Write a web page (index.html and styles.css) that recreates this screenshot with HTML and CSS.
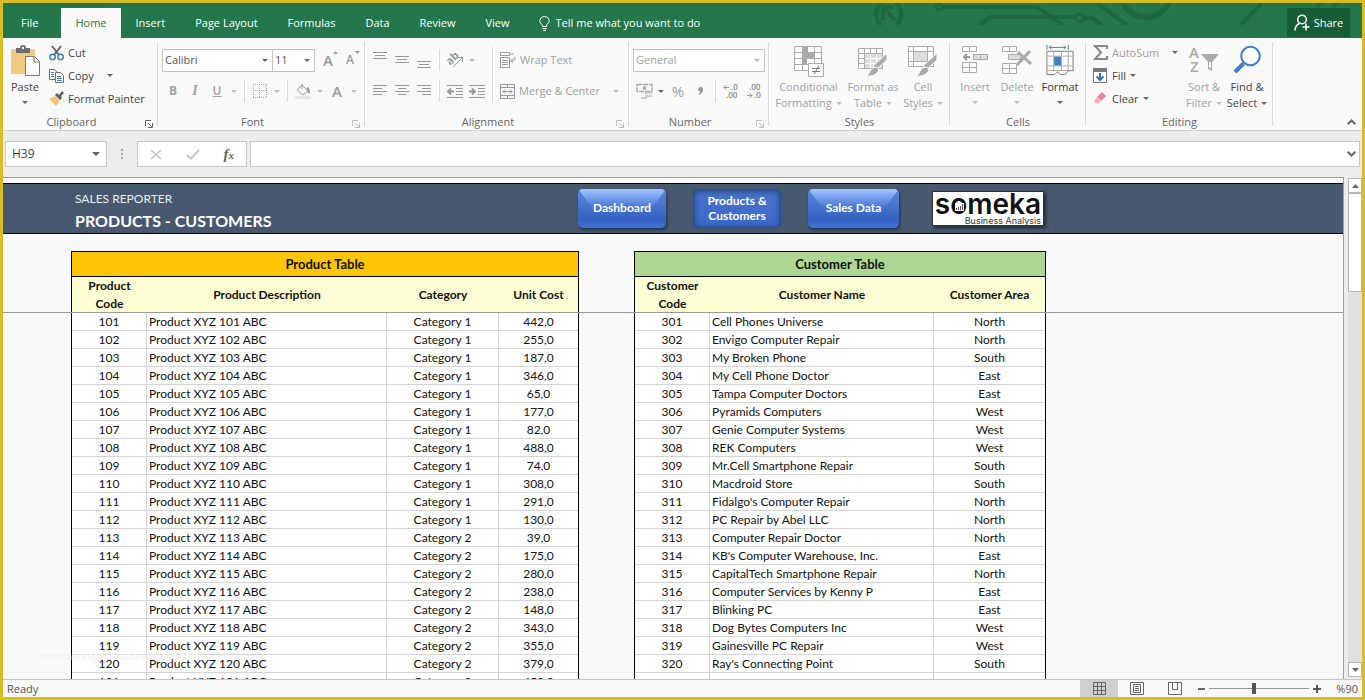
FILE: index.html
```html
<!DOCTYPE html>
<html lang="en">
<head>
<meta charset="utf-8">
<title>Sales Reporter - Products and Customers</title>
<link rel="stylesheet" href="styles.css">
</head>
<body>
<div class="app">
  <header class="titlebar">
    <svg class="circuit" width="480" height="22" viewBox="0 0 480 22" fill="none" stroke="#1d683f" stroke-width="4">
      <path d="M12 -1Q0 10 12 24M25 -1Q38 10 25 24M13 3v14M13 4h10M14 5l11 12" />
      <circle cx="69" cy="4" r="3" stroke-width="2.500"/><path d="M73 4h94l26 18" />
      <path d="M110 22l10-8h86" /><circle cx="210" cy="15" r="4" stroke-width="2.500"/><path d="M214 15h8l10 7M227 0l30 22" />
      <path d="M252 -2a26 26 0 0 0 48 0" stroke-width="6"/><path d="M371 22l21-22M446 4l5-5M462 4l5-5" />
    </svg>
    <nav class="tabs">
      <button class="tab tab-file">File</button>
      <button class="tab tab-active">Home</button>
      <button class="tab">Insert</button>
      <button class="tab">Page Layout</button>
      <button class="tab">Formulas</button>
      <button class="tab">Data</button>
      <button class="tab">Review</button>
      <button class="tab">View</button>
      <button class="tab tell"><svg width="11" height="15" viewBox="0 0 11 15" fill="none" stroke="#fff"><path d="M3.500 10.500V9C1.500 7.500.8 6.300.8 4.800a4.700 4.200 0 0 1 9.400 0c0 1.500-.7 2.700-2.700 4.200v1.500zM3.500 12.500h4M4 14.300h3"/></svg>Tell me what you want to do</button>
    </nav>
    <button class="share"><svg width="17" height="17" viewBox="0 0 17 17" fill="none" stroke="#fff" stroke-width="1.500"><circle cx="8" cy="5.500" r="4.300"/><path d="M1 16.500c0-4 2-6 4.500-7M8.500 13h7M12 9.500v7"/></svg>Share</button>
  </header>

  <section class="ribbon">
    <div class="group g-clipboard">
      <div class="content">
        <button class="big w-paste">
          <svg width="30" height="32" viewBox="0 0 30 32"><path fill="#f2cb83" d="M1 4h24v25H1z"/><path fill="#6d6d6d" d="M6 3h4a3 3 0 0 1 6 0h4v5H6z"/><circle cx="13" cy="3" r="1.200" fill="#fff"/><path d="M15.500 11.500h9l5 5v14h-14zM24 12v5h5" fill="#fff" stroke="#777"/></svg>
          <span>Paste</span><i class="arr"></i>
        </button>
        <div class="stack">
          <button class="item"><svg width="15" height="16" viewBox="0 0 15 16" fill="none"><path stroke="#666" stroke-width="2" d="M3 1l7 9M12 1L5 10"/><circle cx="3.500" cy="12" r="2.700" stroke="#3f7fc0" stroke-width="1.500"/><circle cx="11.500" cy="12" r="2.700" stroke="#3f7fc0" stroke-width="1.500"/></svg>Cut</button>
          <button class="item"><svg width="15" height="15" viewBox="0 0 15 15" fill="#fff" stroke="#6d6d6d"><path d="M.5 1.500h5l2 2v8h-7z"/><path stroke="#3f7fc0" d="M2 4.500h3M2 6.500h3M2 8.500h3"/><path d="M6.500 4.500h5l3 3v7h-8z"/><path stroke="#3f7fc0" d="M8 8.500h4M8 10.500h5M8 12.500h5"/></svg>Copy<i class="arr arr-gap"></i></button>
          <button class="item"><svg width="15" height="15" viewBox="0 0 15 15"><path fill="#f0c57a" d="M0 8l6-3 5 5-4 5z"/><path fill="#5f5f5f" d="M6 4l2-2 2 2 3-4 2 2-3 3 1 2-2 2z"/></svg>Format Painter</button>
        </div>
      </div>
      <div class="label">Clipboard<svg class="launch" width="8" height="8" viewBox="0 0 8 8" fill="none" stroke="currentColor"><path d="M.5 6V.5H6M3 3l4 4M7.500 3v4.500H3"/></svg></div>
    </div>

    <div class="group g-font off">
      <div class="content rows">
        <div class="row">
          <label class="combo w-name"><select aria-label="Font"><option>Calibri</option></select><i class="arr"></i></label>
          <label class="combo w-size"><select aria-label="Font size"><option>11</option></select><i class="arr"></i></label>
          <button class="ic glyph" aria-label="Increase font size">A<svg class="sup" width="5" height="3"><path fill="#999" d="M0 3L2.500 0 5 3z"/></svg></button>
          <button class="ic glyph small-a" aria-label="Decrease font size">A<svg class="sup" width="5" height="3"><path fill="#999" d="M0 0h5L2.500 3z"/></svg></button>
        </div>
        <div class="row">
          <button class="ic bold">B</button><button class="ic italic">I</button><button class="ic under">U</button><button class="dd" aria-label="Underline style"><i class="arr"></i></button>
          <i class="sep"></i>
          <button class="ic" aria-label="Borders"><svg width="14" height="14" viewBox="0 0 14 14" stroke="#aaa" fill="none" stroke-dasharray="1 1"><path d="M.5 0v14M6.500 0v14M13.500 0v14M0 .5h14M0 6.500h14M0 13.500h14"/></svg></button><button class="dd" aria-label="Border style"><i class="arr"></i></button>
          <i class="sep"></i>
          <button class="ic" aria-label="Fill color"><svg width="16" height="16" viewBox="0 0 16 16" fill="none" stroke="#999"><path d="M7 2l6 6-5 4-6-5zM7 1V6"/><path d="M12 5c2 1 2 3 2 5" stroke-width="2"/><path stroke="#e6e6e6" stroke-width="3" d="M0 14.500h16"/></svg></button><button class="dd" aria-label="Fill palette"><i class="arr"></i></button>
          <button class="ic glyph" aria-label="Font color">A</button><button class="dd" aria-label="Font palette"><i class="arr"></i></button>
        </div>
      </div>
      <div class="label">Font<svg class="launch" width="8" height="8" viewBox="0 0 8 8" fill="none" stroke="currentColor"><path d="M.5 6V.5H6M3 3l4 4M7.500 3v4.500H3"/></svg></div>
    </div>

    <div class="group g-align off">
      <div class="content">
        <div class="rows">
          <div class="row">
            <button class="ic" aria-label="Top align"><svg width="14" height="18" stroke="#999"><path d="M0 1.500h14M2 4.500h10M0 7.500h14"/></svg></button>
            <button class="ic" aria-label="Middle align"><svg width="14" height="18" stroke="#999"><path d="M0 5.500h14M2 8.500h10M0 11.500h14"/></svg></button>
            <button class="ic" aria-label="Bottom align"><svg width="14" height="18" stroke="#999"><path d="M0 10.500h14M2 13.500h10M0 16.500h14"/></svg></button>
            <i class="sep"></i>
            <button class="ic" aria-label="Orientation"><svg width="17" height="17" viewBox="0 0 17 17" fill="none" stroke="#999"><text x="0" y="10" transform="rotate(-45 6 8)" font-size="11" font-weight="700" fill="#999" stroke="none">ab</text><path d="M6 15L15 6M11 5.500h4.500V10"/></svg></button><button class="dd" aria-label="Orientation menu"><i class="arr"></i></button>
          </div>
          <div class="row">
            <button class="ic" aria-label="Align left"><svg width="14" height="12" stroke="#999"><path d="M0 .5h14M0 3.500h9M0 6.500h14M0 9.500h9"/></svg></button>
            <button class="ic" aria-label="Center"><svg width="14" height="12" stroke="#999"><path d="M0 .5h14M3 3.500h8M0 6.500h14M3 9.500h8"/></svg></button>
            <button class="ic" aria-label="Align right"><svg width="14" height="12" stroke="#999"><path d="M0 .5h14M5 3.500h9M0 6.500h14M5 9.500h9"/></svg></button>
            <i class="sep"></i>
            <button class="ic" aria-label="Decrease indent"><svg width="16" height="13" stroke="#999"><path d="M0 .5h16M9 3.500h7M9 6.500h7M9 9.500h7M0 12.500h16"/><path d="M1 6.500h6M4 3.500l-3 3 3 3" stroke-width="2" fill="none"/></svg></button>
            <button class="ic" aria-label="Increase indent"><svg width="16" height="13" stroke="#999"><path d="M0 .5h16M9 3.500h7M9 6.500h7M9 9.500h7M0 12.500h16"/><path d="M0 6.500h6M3 3.500l3 3-3 3" stroke-width="2" fill="none"/></svg></button>
          </div>
        </div>
        <i class="sep tall"></i>
        <div class="rows">
          <button class="row wide"><svg width="16" height="16" viewBox="0 0 16 16" fill="none" stroke="#999"><path d="M.5.500h9v3h-9zM10 2h4M.5 5.500h9v10h-9zM2 8.500h6M2 10.500h6M2 12.500h6M15 5v2q0 2-4 2M13 6.500L10.500 9l2.500 2"/></svg>Wrap Text</button>
          <button class="row wide"><svg width="15" height="15" viewBox="0 0 15 15" fill="none" stroke="#999"><path d="M.5.500h14v14H.5zM.5 3.500h14M.5 11.500h14M7.500 0v3M7.500 12v3M3 7.500h9M5 5.500l-2 2 2 2M10 5.500l2 2-2 2"/></svg>Merge &amp; Center<i class="arr arr-gap"></i></button>
        </div>
      </div>
      <div class="label">Alignment<svg class="launch" width="8" height="8" viewBox="0 0 8 8" fill="none" stroke="currentColor"><path d="M.5 6V.5H6M3 3l4 4M7.500 3v4.500H3"/></svg></div>
    </div>

    <div class="group g-number off">
      <div class="content rows">
        <div class="row"><label class="combo w-format"><select aria-label="Number format"><option>General</option></select><i class="arr"></i></label></div>
        <div class="row">
          <button class="ic" aria-label="Accounting format"><svg width="17" height="16" viewBox="0 0 17 16" fill="none" stroke="#aaa"><path d="M1 1.500h15v7H1z" stroke-width="1.500" stroke-dasharray="5 1"/><circle cx="8.500" cy="5" r="1.500" fill="#aaa"/><path stroke="#ccc" stroke-width="2" d="M9 10h7M9 13h7M5 15h6"/></svg></button><button class="dd dark" aria-label="Currency menu"><i class="arr"></i></button>
          <button class="ic percent">%</button><button class="ic comma" aria-label="Comma style"><svg width="5" height="8"><path fill="#999" d="M2.500 0A2.200 2.200 0 0 1 5 2.500Q5 6 1 8L.6 7.200Q2.500 6 2.400 4.500A2.200 2.200 0 0 1 2.500 0z"/></svg></button>
          <i class="sep"></i>
          <button class="ic dec" aria-label="Increase decimal"><svg width="15" height="15" viewBox="0 0 15 15" fill="#888"><text x="7" y="6">.0</text><text x="2" y="14">.00</text><path d="M0 3.500h5M2.500 1L0 3.500 2.500 6" stroke="#999" fill="none"/></svg></button>
          <button class="ic dec" aria-label="Decrease decimal"><svg width="15" height="15" viewBox="0 0 15 15" fill="#888"><text x="2" y="6">.00</text><text x="7" y="14">.0</text><path d="M0 11.500h5M2.500 9L5 11.500 2.500 14" stroke="#999" fill="none"/></svg></button>
        </div>
      </div>
      <div class="label">Number<svg class="launch" width="8" height="8" viewBox="0 0 8 8" fill="none" stroke="currentColor"><path d="M.5 6V.5H6M3 3l4 4M7.500 3v4.500H3"/></svg></div>
    </div>

    <div class="group g-styles off">
      <div class="content">
        <button class="big w-cond"><svg width="30" height="32" viewBox="0 0 30 32" fill="#fff" stroke="#aaa"><path d="M.5 1.500h27v24H.5zM.5 7.500h27M.5 13.500h27M.5 19.500h27M8.500 1.500v24M20.500 1.500v24"/><path fill="#aaa" stroke="none" d="M8 2h6v6h6v5h-3v1h-4v6H8z"/><path d="M14.500 18.500h15v13h-15z"/><path stroke="#777" d="M18 23.500h8M18 26.500h8M25 20.500l-5 9"/></svg><span>Conditional</span><span>Formatting<i class="arr"></i></span></button>
        <button class="big w-table"><svg width="30" height="32" viewBox="0 0 30 32" fill="#fff" stroke="#aaa"><path d="M.5 3.500h24v20H.5zM.5 8.500h24M.5 13.500h24M.5 18.500h24M6.500 3.500v20M12.500 3.500v20M18.500 3.500v20"/><path fill="#ddd" d="M6.500 8.500h18v15h-18z"/><path stroke="#fff" d="M7 13.500h17M7 18.500h17M12.500 9v14M18.500 9v14"/><path fill="#aaa" stroke="#fff" d="M29 8v7L19 24l-4-3z"/><path fill="#aaa" stroke="#fff" d="M18 22q4 1 2 5-4 5-12 4 3-1 4-5 2-4 6-4z"/></svg><span>Format as</span><span>Table<i class="arr"></i></span></button>
        <button class="big w-cell"><svg width="30" height="32" viewBox="0 0 30 32" fill="#fff" stroke="#aaa"><path d="M.5 1.500h25v20H.5zM.5 6.500h25M.5 16.500h25M5.500 1.500v20M19.500 1.500v20"/><path fill="#ddd" d="M5.500 6.500h14v10h-14z"/><path fill="#aaa" stroke="#fff" d="M29 8v7L19 24l-4-3z"/><path fill="#aaa" stroke="#fff" d="M18 22q4 1 2 5-4 5-12 4 3-1 4-5 2-4 6-4z"/></svg><span>Cell</span><span>Styles<i class="arr"></i></span></button>
      </div>
      <div class="label">Styles</div>
    </div>

    <div class="group g-cells off">
      <div class="content">
        <button class="big w-cell"><svg width="28" height="32" viewBox="0 0 28 32" fill="#fff" stroke="#aaa"><path d="M1.500 1.500h14v5h-14zM8.500 1.500v5M1.500 17.500h14v10h-14zM8.500 17.500v10M1.500 22.500h14"/><path fill="#ddd" d="M12.500 9.500h14v5h-14zM19.500 9.500v5"/><path fill="none" stroke="#999" stroke-width="2" d="M3 12h6M6 9l-3 3 3 3"/></svg><span>Insert</span><i class="arr"></i></button>
        <button class="big w-cell"><svg width="30" height="32" viewBox="0 0 30 32" fill="#fff" stroke="#aaa"><path d="M.5 1.500h14v5H.5zM7.500 1.500v5M.5 18.500h14v10H.5zM7.500 18.500v10M.5 23.500h14"/><path fill="#ddd" d="M6.500 9.500h12v5h-12z"/><path fill="none" stroke-width="3" d="M16 7l13 12M28 6L15 20"/></svg><span>Delete</span><i class="arr"></i></button>
        <button class="big w-format-cells on"><svg width="28" height="33" viewBox="0 0 28 33" fill="#fff" stroke="#777"><path d="M.5 6.500h27v20H.5z"/><path stroke="#aaa" d="M1 11.500h26M1 21.500h26M7.500 7v19M15.500 7v19M22.500 7v19"/><path d="M.5 26.500v4h8l3-3 3 3h5l3-4"/><path fill="#3f7fc0" stroke="none" d="M8 12h7v9H8z"/><path fill="none" stroke="#3f7fc0" d="M.5 0v5M22.500 0v5M3 2.500h17M5 .500l-2 2 2 2M18 .500l2 2-2 2"/></svg><span>Format</span><i class="arr"></i></button>
      </div>
      <div class="label">Cells</div>
    </div>

    <div class="group g-edit">
      <div class="content">
        <div class="stack w-edit">
          <button class="item off"><svg width="15" height="15" viewBox="0 0 15 15" fill="none" stroke="#888" stroke-width="2"><path d="M14 4V1H2l6 6.500L2 14h12v-3"/></svg>AutoSum<i class="arr arr-gap dark"></i></button>
          <button class="item"><svg width="15" height="15" viewBox="0 0 15 15" fill="#fff" stroke="#777"><path d="M.5.500h13v14H.5z"/><path stroke="none" fill="#777" d="M0 0h14v4H0z"/><path fill="none" stroke="#2f74b8" stroke-width="2" d="M7 5v7M3.500 8.500L7 12l3.500-3.500"/></svg>Fill<i class="arr"></i></button>
          <button class="item"><svg width="15" height="15" viewBox="0 0 15 15"><path fill="#ea8296" d="M9 1l4 4-5 5-4-4z"/><path fill="#f2a9b7" d="M3.500 6.500l4 4-2 2-3-.5-1.500-2z"/></svg>Clear<i class="arr"></i></button>
        </div>
        <button class="big w-cell off"><svg width="30" height="32" viewBox="0 0 30 32"><text x="0" y="13" class="az">A</text><text x="1" y="27" class="az">Z</text><path fill="#aaa" d="M12 9h18l-7 8v9l-4-2v-7z"/><path fill="#fff" d="M20 17h2v6l-2-1z"/></svg><span>Sort &amp;</span><span>Filter<i class="arr"></i></span></button>
        <button class="big w-format-cells"><svg width="28" height="32" viewBox="0 0 28 32" fill="#fff" stroke="#3f7fc0"><circle cx="17.500" cy="11" r="9.300" stroke-width="2"/><path stroke-width="4" d="M10.500 18.500L2 27"/></svg><span>Find &amp;</span><span>Select<i class="arr"></i></span></button>
      </div>
      <div class="label">Editing</div>
    </div>
    <button class="collapse" aria-label="Collapse the ribbon"><svg width="9" height="6" fill="none" stroke="#666" stroke-width="2"><path d="M.7 5.300L4.500 1.500 8.300 5.300"/></svg></button>
  </section>

  <section class="formula">
    <label class="namebox"><input value="H39" aria-label="Name box"><i class="arr arr-big"></i></label>
    <i class="grip"></i>
    <div class="fx">
      <button aria-label="Cancel"><svg width="12" height="11" stroke="#c4c4c4" stroke-width="1.500"><path d="M1 1l10 9M11 1L1 10"/></svg></button>
      <button aria-label="Enter"><svg width="14" height="11" fill="none" stroke="#c4c4c4" stroke-width="2"><path d="M1 6l4 3.500L13 1"/></svg></button>
      <button class="fn" aria-label="Insert function">f<small>x</small></button>
    </div>
    <div class="bar"><input aria-label="Formula bar"><svg width="9" height="6" fill="none" stroke="#666" stroke-width="2"><path d="M.7.700L4.500 4.500 8.300.700"/></svg></div>
  </section>

  <div class="work">
    <main class="sheet">
      <div class="banner">
        <div class="heading"><p>SALES REPORTER</p><h1>PRODUCTS - CUSTOMERS</h1></div>
        <nav class="links">
          <button class="pill">Dashboard</button>
          <button class="pill pressed">Products &amp; Customers</button>
          <button class="pill pill-wide">Sales Data</button>
        </nav>
        <div class="logo"><span class="brand">s<span class="brand-o">o<svg class="mark" width="9" height="8" viewBox="0 0 9 8"><path fill="#fff" d="M0 0h9v8H0z"/><path fill="#555" d="M1 5h1v2H1zM3 4h1v3H3zM5 3h1v4H5zM7 1h1v6H7z"/></svg></span>meka</span><span class="tag">Business Analysis</span></div>
      </div>
      <div class="tables">
        <i class="freeze"></i>
        <table class="grid product">
          <colgroup><col class="c-code"><col class="c-desc"><col class="c-mid"><col class="c-cost"></colgroup>
          <thead><tr><th colspan="4" class="title">Product Table</th></tr>
          <tr class="heads"><th>Product Code</th><th>Product Description</th><th>Category</th><th>Unit Cost</th></tr></thead>
          <tbody id="products"></tbody>
        </table>
        <table class="grid customer">
          <colgroup><col class="c-code"><col class="c-name"><col class="c-area"></colgroup>
          <thead><tr><th colspan="3" class="title">Customer Table</th></tr>
          <tr class="heads"><th>Customer Code</th><th>Customer Name</th><th>Customer Area</th></tr></thead>
          <tbody id="customers"></tbody>
        </table>
      </div>
      <span class="watermark">www.heritagechristiancollege.com</span>
    </main>
    <div class="scroll">
      <button aria-label="Scroll up"><svg width="7" height="4"><path fill="#666" d="M0 4l3.500-4L7 4z"/></svg></button>
      <div class="thumb"></div>
      <div class="track"></div>
      <button aria-label="Scroll down"><svg width="7" height="4"><path fill="#666" d="M0 0h7L3.500 4z"/></svg></button>
    </div>
  </div>

  <footer class="status">
    <span class="ready">Ready</span>
    <button class="view view-on" aria-label="Normal view"><svg width="13" height="13" fill="none" stroke="#666"><path d="M.5.500h12v12H.5zM.5 4.500h12M.5 8.500h12M4.500.500v12M8.500.500v12"/></svg></button>
    <button class="view" aria-label="Page layout view"><svg width="14" height="13" fill="none" stroke="#666"><path d="M.5.500h13v12H.5zM3.500 2.500h7v8h-7zM5 4.500h4M5 6.500h4M5 8.500h4"/></svg></button>
    <button class="view" aria-label="Page break view"><svg width="14" height="13" fill="none" stroke="#666"><path d="M.5.500h13v12H.5zM4.500.500v7h5v-7M4.500 7.500h5"/></svg></button>
    <button class="zoom" aria-label="Zoom out"><svg width="7" height="8"><path fill="#666" d="M0 3h7v2H0z"/></svg></button>
    <input class="slider" type="range" min="0" max="100" value="44" aria-label="Zoom">
    <button class="zoom" aria-label="Zoom in"><svg width="8" height="8"><path fill="#555" d="M0 3h8v2H0zM3 0h2v8H3z"/></svg></button>
    <span class="pct">%90</span>
  </footer>
</div>
<script src="app.js"></script>
</body>
</html>
```
FILE: styles.css
```css
* { box-sizing: border-box; }
body { margin: 0; font-family: "Open Sans", "Noto Sans", sans-serif; font-size: 12px; line-height: 16px; color: #444; }
button, input, select { font: inherit; color: inherit; background: none; border: 0; padding: 0; margin: 0; }
i { font-style: normal; }
svg { flex: none; display: block; overflow: visible; }
.app { height: 100vh; display: flex; flex-direction: column; border: 3px solid #d8bd28; background: #f9f9f9; overflow: hidden; }

.titlebar { position: relative; flex: none; height: 35px; background: #24774b; display: flex; align-items: flex-end; justify-content: space-between; padding-right: 12px; color: #fff; font-size: 11px; }
.circuit { position: absolute; right: 12px; top: 0; overflow: hidden; }
.tabs { display: flex; padding-left: 3px; position: relative; }
.tab { height: 30px; padding: 0 15px; white-space: nowrap; }
.tab-file { padding-right: 23px; }
.tab-active { padding: 0 14px; background: #f9f9f9; color: #24774b; }
.tell { display: flex; align-items: center; gap: 6px; padding-left: 14px; }
.share { position: relative; height: 29px; width: 63px; background: #165d34; display: flex; align-items: center; justify-content: center; gap: 3px; margin-bottom: 1px; }

.ribbon { flex: none; height: 93px; display: flex; align-items: stretch; background: #f9f9f9; border-bottom: 1px solid #d2d2d2; font-size: 11px; }
.group { flex: none; display: flex; flex-direction: column; padding-top: 3px; position: relative; }
.group::after { content: ""; position: absolute; right: 0; top: 4px; bottom: 4px; border-right: 1px solid #d8d8d8; }
.g-clipboard { width: 155px; }
.g-font { width: 207px; }
.g-align { width: 264px; }
.g-number { width: 140px; }
.g-styles { width: 181px; }
.g-cells { width: 136px; }
.g-edit { width: 187px; }
.content { height: 72px; display: flex; padding-left: 4px; }
.g-clipboard .content { padding-left: 3px; }
.rows { display: flex; flex-direction: column; gap: 5px; padding-top: 6px; }
.content.rows { padding-left: 4px; }
.row { height: 26px; display: flex; align-items: center; }
.label { position: relative; text-align: center; color: #666; padding-right: 18px; line-height: 17px; }
.g-styles .label, .g-cells .label, .g-edit .label { padding-right: 0; }
.launch { position: absolute; right: 5px; top: 7px; }
.off .launch { color: #bbb; }
.off .content, .item.off, .big.off { color: #a0a0a0; }
.off .on { color: #333; }

.arr { display: inline-block; flex: none; width: 0; height: 0; border: 3px solid transparent; border-top-color: #666; border-bottom: 0; }
.off .arr { border-top-color: #bbb; }
.off .on .arr, .off .dark .arr, .off .arr.dark, .off .w-name .arr, .off .w-size .arr { border-top-color: #666; }
.arr-gap { margin-left: 9px; }
.arr-big { border-width: 4px 4px 0; }
.big { display: flex; flex-direction: column; align-items: center; padding-top: 4px; height: 72px; white-space: nowrap; }
.big svg { height: 32px; margin-bottom: 2px; }
.big > .arr { margin-top: 6px; }
.big span .arr { margin-left: 4px; vertical-align: 2px; }
.w-paste { width: 38px; }
.w-cond { width: 71px; }
.w-table { width: 58px; }
.w-cell { width: 42px; }
.w-format-cells { width: 44px; }
.w-edit { width: 90px; }
.g-edit .content { padding-left: 7px; }
.stack { display: flex; flex-direction: column; padding-left: 5px; }
.w-edit { padding-left: 0; }
.item { height: 23px; display: flex; align-items: center; gap: 4px; white-space: nowrap; }

.combo { display: flex; align-items: center; height: 23px; border: 1px solid #c3c3c3; background: #fff; padding: 0 4px 0 2px; }
.combo select { appearance: none; flex: 1; min-width: 0; opacity: 1; }
.w-name { width: 111px; }
.w-size { width: 43px; margin-left: -1px; }
.off .w-name, .off .w-size { color: #555; }
.w-format { width: 132px; }
.ic { width: 22px; height: 22px; display: flex; align-items: center; justify-content: center; position: relative; }
.w-size + .ic { margin-left: 2px; }
.glyph { font-size: 15px; font-weight: 600; color: #999; }
.small-a { font-size: 12px; }
.sup { position: absolute; top: 2px; right: 1px; }
.bold { font-weight: 700; font-size: 12px; }
.italic { font-style: italic; font-family: "Liberation Serif", serif; font-weight: 700; font-size: 14px; }
.under { text-decoration: underline; font-weight: 600; font-size: 12px; }
.dd { width: 12px; height: 22px; display: flex; align-items: center; justify-content: center; }
.sep { width: 9px; height: 22px; flex: none; background: linear-gradient(#d8d8d8, #d8d8d8) center / 1px 100% no-repeat; }
.sep.tall { height: 56px; margin-top: 6px; }
.g-align .content { padding-left: 4px; }
.wide { gap: 4px; padding-left: 3px; }
.percent { font-size: 15px; }
.dec { width: 23px; }
.dec text { font-size: 8px; font-weight: 600; }
.az { font-size: 15px; font-weight: 600; fill: #aaa; }
.collapse { margin: auto 6px 5px auto; }

.formula { flex: none; height: 46px; background: #ededed; display: flex; align-items: center; padding: 0 2px; font-size: 12px; }
.namebox, .fx, .bar { height: 26px; background: #fff; border: 1px solid #c9c9c9; display: flex; align-items: center; }
.namebox { width: 102px; padding: 0 6px; }
.namebox input { flex: 1; min-width: 0; }
.grip { width: 2px; height: 10px; margin: 0 14px; background: repeating-linear-gradient(#aaa 0 2px, transparent 2px 4px); }
.fx { width: 110px; justify-content: space-around; }
.fn { font-family: "Liberation Serif", serif; font-style: italic; font-weight: 700; font-size: 15px; color: #666; }
.fn small { font-size: 11px; }
.bar { flex: 1; margin-left: 3px; padding-right: 3px; }
.bar input { flex: 1; min-width: 0; }

.work { flex: 1; min-height: 0; display: flex; background: #ededed; }
.sheet { position: relative; flex: 1; min-width: 0; overflow: hidden; border-top: 1px solid #9f9f9f; border-right: 1px solid #9f9f9f; background: #f9f9f9; padding-top: 5px; font-family: Lato, "Open Sans", sans-serif; font-size: 12px; color: #111; }
.banner { height: 51px; border: solid #000; border-width: 1px 0; background: #48586e; display: flex; color: #fff; padding-left: 72px; }
.heading { width: 503px; padding-top: 7px; }
.heading p { margin: 0; line-height: 16px; color: #e8ecf0; }
.heading h1 { margin: 4px 0 0; font-size: 16px; line-height: 20px; }
.links { display: flex; gap: 27px; padding-top: 5px; }
.pill { position: relative; isolation: isolate; overflow: hidden; width: 88px; height: 39px; border-radius: 5px; color: #fff; font-weight: 700; line-height: 15px; padding-bottom: 2px; background: linear-gradient(#5d88e0, #4270ca 50%, #3461c2 80%, #4474d8); box-shadow: 1px 2px 3px #26344a; }
.pill::before { content: ""; position: absolute; inset: 0; z-index: -1; background: linear-gradient(#a4c6ff 0, #7ba3f0 20%, #4a78d2 46%, #3d6bc8 60%); clip-path: polygon(0 0, 100% 0, 80% 60%, 20% 60%); }
.pill-wide { width: 91px; }
.pressed { background: linear-gradient(#4a72c8, #3a68cc); box-shadow: inset 0 1px 5px 2px #28488c, inset 0 0 2px #203a78; }
.pressed::before { display: none; }
.logo { width: 112px; height: 35px; margin: 7px 0 0 33px; background: #fff; border: 1px solid #333; box-shadow: 2px 2px 3px #222c3a; color: #111; display: flex; flex-direction: column; align-items: flex-end; overflow: hidden; font-family: Inter, sans-serif; }
.brand { font-size: 28px; font-weight: 600; line-height: 24px; padding-right: 2px; }
.brand-o { position: relative; }
.mark { position: absolute; left: 5px; top: 16px; }
.tag { font-size: 9px; line-height: 9px; padding-right: 2px; color: #333; }

.tables { position: relative; display: flex; align-items: flex-start; gap: 55px; padding: 17px 0 0 68px; }
.freeze { position: absolute; left: 0; right: 0; top: 78px; border-top: 1px solid #9a9a9a; }
.grid { border-collapse: separate; border-spacing: 0; table-layout: fixed; border: solid #000; border-width: 1px 1px 0; background: #fff; flex: none; }
.product { width: 508px; }
.customer { width: 412px; }
.c-code { width: 75px; }
.c-desc { width: 240px; }
.c-name { width: 224px; }
.c-mid { width: 112px; }
.c-area { width: 111px; }
.grid th, .grid td { padding: 0 2px; line-height: 17px; text-align: center; }
.grid .title { height: 25px; border-bottom: 1px solid #000; background: #fdc503; font-size: 13px; }
.customer .title { background: #acd692; }
.heads th { height: 36px; line-height: 18px; background: #fdfdd3; }
.grid th { line-height: 18px; }
.grid td { height: 18px; border: solid #d4d4d4; border-width: 0 1px 1px 0; }
.grid td:last-child { border-right: 0; }
.grid td:nth-child(2) { text-align: left; }
.watermark { position: absolute; left: 37px; top: 470px; font: 10px/16px "Open Sans", sans-serif; color: #f0f0f0; }

.scroll { width: 18px; padding: 1px 0 2px 4px; display: flex; flex-direction: column; }
.scroll button { height: 15px; background: #fff; border: 1px solid #b5b5b5; display: flex; align-items: center; justify-content: center; }
.thumb { height: 99px; background: #fff; border: 1px solid #b5b5b5; }
.track { flex: 1; background: #e0e0e0; }

.status { flex: none; height: 18px; border-top: 1px solid #c6c6c6; background: #f8f8f8; display: flex; align-items: center; font-size: 11px; padding: 0 4px 0 4px; color: #555; }
.ready { flex: 1; }
.view { width: 38px; height: 17px; display: flex; align-items: center; justify-content: center; }
.view-on { background: #cfcfcf; }
.zoom { margin: 0 4px; }
.slider { appearance: none; width: 100px; height: 12px; background: linear-gradient(#999, #999) center / 100% 1px no-repeat; }
.slider::-webkit-slider-thumb { appearance: none; width: 4px; height: 11px; background: #555; }
.pct { margin-left: 11px; }
```
FILE: app.js
```js
const costs = ["442,0", "255,0", "187,0", "346,0", "65,0", "177,0", "82,0", "488,0", "74,0", "308,0", "291,0", "130,0", "39,0", "175,0", "280,0", "238,0", "148,0", "343,0", "355,0", "379,0", "450,0"];

const customers = [
  ["Cell Phones Universe", "North"], ["Envigo Computer Repair", "North"], ["My Broken Phone", "South"],
  ["My Cell Phone Doctor", "East"], ["Tampa Computer Doctors", "East"], ["Pyramids Computers", "West"],
  ["Genie Computer Systems", "West"], ["REK Computers", "West"], ["Mr.Cell Smartphone Repair", "South"],
  ["Macdroid Store", "South"], ["Fidalgo's Computer Repair", "North"], ["PC Repair by Abel LLC", "North"],
  ["Computer Repair Doctor", "North"], ["KB's Computer Warehouse, Inc.", "East"], ["CapitalTech Smartphone Repair", "North"],
  ["Computer Services by Kenny P", "East"], ["Blinking PC", "East"], ["Dog Bytes Computers Inc", "West"],
  ["Gainesville PC Repair", "West"], ["Ray's Connecting Point", "South"], ["", ""]
];

function addRow(body, cells) {
  const row = body.insertRow();
  for (const text of cells) row.insertCell().textContent = text;
}

const productBody = document.getElementById("products");
costs.forEach((cost, i) => {
  addRow(productBody, [101 + i, `Product XYZ ${101 + i} ABC`, i < 12 ? "Category 1" : "Category 2", cost]);
});

const customerBody = document.getElementById("customers");
customers.forEach(([name, area], i) => addRow(customerBody, [name ? 301 + i : "", name, area]));
```
